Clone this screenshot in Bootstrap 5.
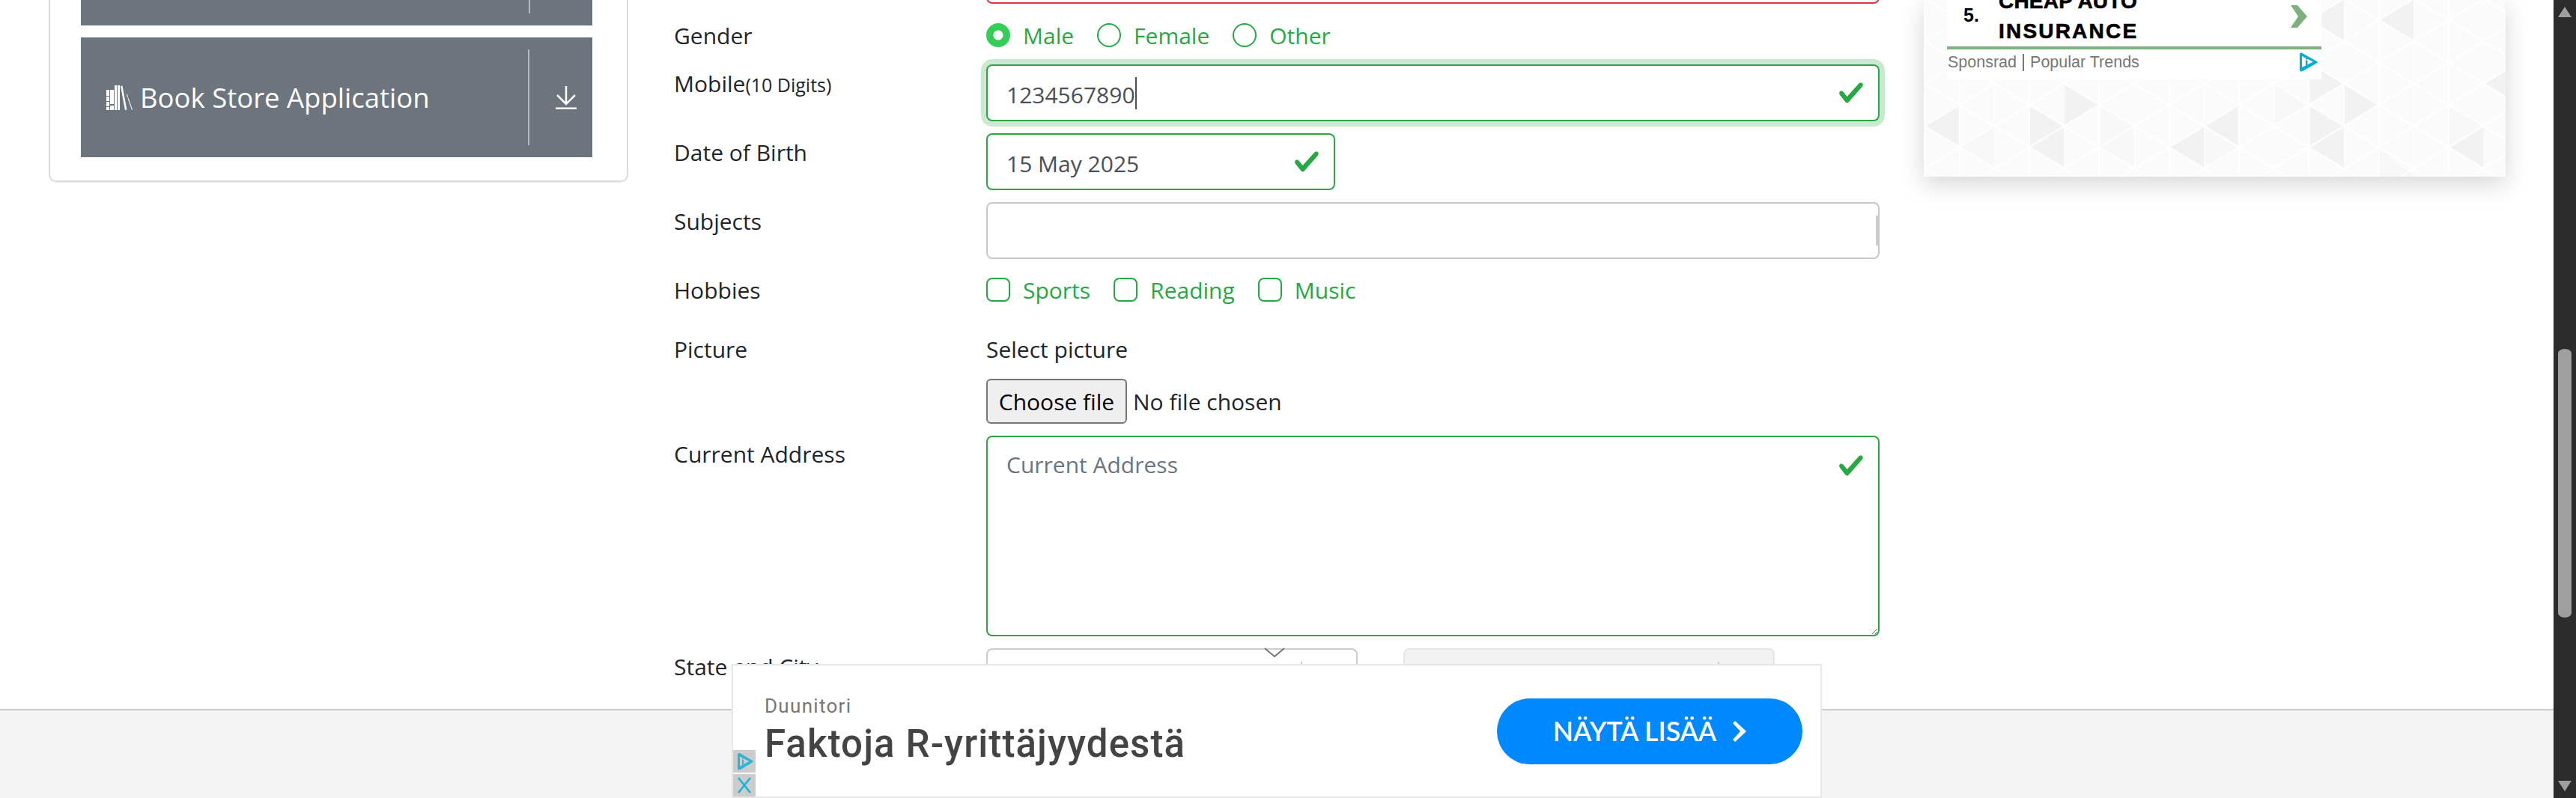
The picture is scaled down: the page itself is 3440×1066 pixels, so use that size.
<!DOCTYPE html>
<html lang="en">
  <head>
    <meta charset="UTF-8" />
    <title>Practice Form</title>
    <link rel="stylesheet" href="https://cdn.jsdelivr.net/npm/bootstrap@5.3.0/dist/css/bootstrap.min.css" />
    <script src="https://cdn.jsdelivr.net/npm/bootstrap@5.3.0/dist/js/bootstrap.bundle.min.js"></script>
    <style>
      html, body { height: 100%; overflow: hidden; }
      body { font-family: "Open Sans", sans-serif; font-size: 30px; color: #212529; background: #fff; }
      .shell { height: 1066px; }
      .page-area { width: 3410px; height: 1066px; }
      .page-main { height: 947px; overflow: hidden; }
      .page-foot { height: 119px; background: #f4f4f4; border-top: 2px solid #ccc; }

      /* fake window scrollbar */
      .win-bar { width: 30px; background: #2c2c2c; padding: 9px 6px 10px; }
      .bar-thumb { height: 359px; margin-top: 443px; background: #9f9f9f; border-radius: 9px / 6px; }
      .bar-up { width: 0; height: 0; border-left: 9px solid transparent; border-right: 9px solid transparent; border-bottom: 14px solid #9f9f9f; }
      .bar-down { width: 0; height: 0; border-left: 9px solid transparent; border-right: 9px solid transparent; border-top: 14px solid #9f9f9f; margin-top: 218px; }

      /* sidebar */
      .side-col { width: 774px; margin-left: 65px; margin-top: -142px; }
      .side-box { border: 2px solid #ddd; border-radius: 10px; padding: 14px 46px 31px 41px; height: 385px; box-shadow: 0 1px 1px rgba(0,0,0,.08); }
      .app-btn { background: #6c757d; color: #fff; height: 160px; padding: 0 21px 0 34px; margin-bottom: 16px; font-size: 36.5px; }
      .app-btn:last-child { margin-bottom: 0; }
      .app-name { width: 564px; gap: 10px; }
      .app-split { width: 2px; height: 128px; background: #b5b9bd; margin-right: 35px; }

      /* form */
      .form-col { width: 1610px; margin-left: 61px; margin-top: -71px; }
      .field-row { display: flex; }
      .field-name { width: 417px; flex: none; padding-top: 2px; }
      .field-name.low-name { padding-top: 3px; }
      .field-name small { font-size: 25px; }
      .field-box { flex: 1; min-width: 0; position: relative; }
      .field-gender { margin-top: 20px; height: 45px; }
      .field-gender .field-name, .field-hobby .field-name { padding-top: 0; }
      .field-mobile { margin-top: 16px; }
      .field-mobile .field-name { padding-top: 3px; }
      .field-hobby { margin-top: 19px; height: 45px; }
      .field-picture { margin-top: 34px; }
      .field-picture .field-name { padding-top: 0; }
      .choose-line { margin-top: 17px; }
      .form-control.txt-input { height: 76px; font-size: 30px; padding: 14px 25px 10px; border: 2px solid #c8c8c8; border-radius: 8px; color: #495057; font-family: inherit; }
      .form-control.txt-input.bad { border-color: #dc3545; }
      .form-control.txt-input.good, .good-area {
        border-color: #28a745;
        background-image: url("data:image/svg+xml,%3csvg xmlns='http://www.w3.org/2000/svg' viewBox='0 0 8 8'%3e%3cpath fill='%2328a745' d='M2.3 6.73L.6 4.53c-.4-1.04.46-1.4 1.1-.8l1.1 1.4 3.4-3.8c.6-.63 1.6-.27 1.2.7l-4 4.6c-.43.5-.8.4-1.1.1z'/%3e%3c/svg%3e");
        background-repeat: no-repeat;
        background-position: right 18px center;
        background-size: 36px 36px;
      }
      .form-control.txt-input.glow, .form-control.txt-input.glow:focus { box-shadow: 0 0 0 7px rgba(40,167,69,.25); }
      .caret-mark { position: absolute; left: 199px; top: 17px; width: 2px; height: 43px; background: #495057; }
      .edge-mark { position: absolute; right: 2px; top: 18px; width: 3px; height: 40px; background: #ccc; }
      .dob-box { width: 466px; }
      .form-control.addr-area { height: 268px; font-size: 30px; padding: 14px 25px 10px; border: 2px solid #28a745; border-radius: 8px; background-position: right 18px top 20px; font-family: inherit; }
      .form-control.addr-area::placeholder { color: #6c757d; }
      .pick-list { display: flex; color: #28a745; }
      .form-check-input.pick-mark { width: 32px; height: 32px; margin: 0 17px 2px 0; flex: none; border: 2px solid #28a745; box-shadow: none; }
      .form-check-input.pick-mark[type=checkbox] { border-radius: 8px; }
      .form-check-input.pick-mark:checked { background: #34ce57; border-color: #34ce57; background-image: radial-gradient(circle, #fff 0 6px, transparent 7px); }
      .pick-item { display: flex; align-items: center; margin-right: 31px; height: 32px; }
      .choose-btn { width: 188px; height: 60px; background: #efefef; border: 2px solid #767676; border-radius: 6px; color: #000; font-size: 30px; padding: 0; font-family: inherit; }
      .pick-combo { width: 496px; height: 76px; border: 2px solid #ccc; border-radius: 8px; padding: 16px 72px 0 0; }
      .pick-combo.off { background: #f2f2f2; border-color: #e6e6e6; margin-left: 61px; }
      .combo-split { width: 2px; height: 60px; background: #ccc; margin-left: auto; }

      /* right ad */
      .rail-col { width: 777px; margin-left: 59px; height: 236px; flex: none; position: relative; background: #fbfbfb; box-shadow: 0 10px 30px rgba(0,0,0,.16); }
      .rail-art { position: absolute; inset: 0; width: 777px; height: 236px; }
      .rail-card { position: relative; width: 500px; height: 106px; margin-left: 31px; background: #fff; font-family: "Liberation Sans", Arial, sans-serif; }
      .rail-top { height: 62px; color: #000; font-weight: 700; overflow: hidden; }
      .rail-num { font-size: 25px; width: 47px; margin: 0 0 20px 22px; flex: none; }
      .rail-words { font-size: 28px; line-height: 40px; margin-top: -18px; letter-spacing: 2.2px; -webkit-text-stroke: .6px #000; flex-grow: 1; align-self: flex-start; }
      .rail-tight { letter-spacing: .2px; }
      .rail-more { margin: 7px 19px 0 0; align-self: flex-start; flex: none; }
      .rail-line { height: 4px; background: #7db07d; }
      .rail-foot { font-size: 21.5px; color: #777; height: 40px; padding: 0 5px 6px 1px; }
      .rail-bar { width: 2px; height: 23px; background: #777; margin: 0 8px; }

      /* bottom ad */
      .strip-ad { position: absolute; left: 977px; top: 887px; width: 1456px; height: 179px; background: #fff; border: 2px solid #e6e6e6; padding: 0 24px 0 42px; }
      .strip-copy { padding-bottom: 4px; }
      .strip-from { font-size: 26px; letter-spacing: 1.3px; color: #777; font-family: Roboto, sans-serif; line-height: 1; }
      .strip-title { font-size: 51px; letter-spacing: 1.1px; color: #444; font-family: Roboto, sans-serif; font-weight: 500; line-height: 1; margin-top: 12px; }
      .strip-go { width: 408px; height: 88px; background: #0088ff; border-radius: 44px; color: #fff; font-family: Lato, sans-serif; font-size: 35.5px; font-weight: 600; gap: 22px; }
      .strip-tag { position: absolute; left: 0; width: 30px; height: 30px; background: #ccc; }
      .strip-fold { position: absolute; left: 1688px; top: 865px; }
    </style>
  </head>
  <body>
    <div class="shell d-flex">
      <div class="page-area d-flex flex-column">
        <div class="page-main d-flex align-items-start">
          <aside class="side-col flex-shrink-0">
            <div class="side-box">
              <div class="app-btn d-flex align-items-center">
                <div class="app-name"></div>
                <div class="app-split"></div>
              </div>
              <div class="app-btn d-flex align-items-center">
                <div class="app-name d-flex align-items-center">
                  <svg width="35" height="33" viewBox="0 0 35 33" fill="#fff"><path d="M0 6h4v8H0zM0 15h4v6H0zM0 22h4v6H0zM0 29h4v4H0zM5 6h5v19H5zM5 27h5v6H5zM11 0h3v33h-3zM15 0h3v33h-3zM19 1l2.400-.6 6 32-2.400.6zM27 12l1-.3 1 4-1 .3zM28.500 17l1-.3 5.500 16-1 .3z"/></svg>
                  <span>Book Store Application</span>
                </div>
                <div class="app-split"></div>
                <svg width="28" height="32" viewBox="0 0 28 32" fill="none" stroke="#fff" stroke-width="2.500"><path d="M14 1v24M2 13l12 12 12-12"/><path d="M0 31h28" stroke-width="3"/></svg>
              </div>
            </div>
          </aside>

          <main class="form-col flex-shrink-0">
            <div class="field-row">
              <div class="field-name"></div>
              <div class="field-box"><input class="form-control txt-input bad" type="text" /></div>
            </div>
            <div class="field-row align-items-center field-gender">
              <div class="field-name">Gender</div>
              <div class="pick-list">
                <label class="pick-item"><input class="form-check-input pick-mark" type="radio" name="g" checked />Male</label>
                <label class="pick-item"><input class="form-check-input pick-mark" type="radio" name="g" />Female</label>
                <label class="pick-item"><input class="form-check-input pick-mark" type="radio" name="g" />Other</label>
              </div>
            </div>
            <div class="field-row field-mobile">
              <div class="field-name">Mobile<small>(10 Digits)</small></div>
              <div class="field-box">
                <input class="form-control txt-input good glow" type="text" value="1234567890" />
                <span class="caret-mark"></span>
              </div>
            </div>
            <div class="field-row mt-3">
              <div class="field-name low-name">Date of Birth</div>
              <div class="dob-box"><input class="form-control txt-input good" type="text" value="15 May 2025" /></div>
            </div>
            <div class="field-row mt-3">
              <div class="field-name low-name">Subjects</div>
              <div class="field-box"><input class="form-control txt-input" type="text" /><span class="edge-mark"></span></div>
            </div>
            <div class="field-row align-items-center field-hobby">
              <div class="field-name">Hobbies</div>
              <div class="pick-list">
                <label class="pick-item"><input class="form-check-input pick-mark" type="checkbox" />Sports</label>
                <label class="pick-item"><input class="form-check-input pick-mark" type="checkbox" />Reading</label>
                <label class="pick-item"><input class="form-check-input pick-mark" type="checkbox" />Music</label>
              </div>
            </div>
            <div class="field-row field-picture">
              <div class="field-name">Picture</div>
              <div>
                <div>Select picture</div>
                <div class="d-flex align-items-center gap-2 choose-line">
                  <button class="choose-btn" type="button">Choose file</button>
                  <span>No file chosen</span>
                </div>
              </div>
            </div>
            <div class="field-row mt-3">
              <div class="field-name">Current Address</div>
              <div class="field-box"><textarea class="form-control addr-area good-area" placeholder="Current Address"></textarea></div>
            </div>
            <div class="field-row mt-3">
              <div class="field-name">State and City</div>
              <div class="d-flex">
                <div class="pick-combo d-flex"><span class="combo-split"></span></div>
                <div class="pick-combo off d-flex"><span class="combo-split"></span></div>
              </div>
            </div>
          </main>

          <section class="rail-col">
            <svg class="rail-art" viewBox="0 0 777 236">
              <defs>
                <pattern id="mesh" x="1" y="-1.700" width="93.330" height="56.670" patternUnits="userSpaceOnUse">
                  <path d="M0 0V56.670M46.670 0V56.670M0 0L93.330 56.670M0 56.670L93.330 0" fill="none" stroke="#fff" stroke-width="2"/>
                </pattern>
              </defs>
              <path fill="#f2f2f2" d="M561 112v56l47-28zM514 140v57l47-29zM561 168v57l-47-28zM421 140v57l-47-29zM374 168v57l-46-28zM654-2v57l-47-28zM749 168v57l-47-28zM561-2v57l-47-28zM514 83v57l47-28zM141 140v57l46-29zM187 112v56l47-28zM48 140v57L1 168zM187 168v57l-46-28zM796 83v57l-47-28z"/>
              <path fill="#f8f8f8" d="M374 168v57l47-28zM234 140v57l47-29zM281 168v57l-47-28zM468 112v56l46-28zM608 197v39h47zM95 168v57l-47-28zM702 140v57l47-29z"/>
              <rect width="777" height="236" fill="url(#mesh)"/>
            </svg>
            <div class="rail-card">
              <div class="rail-top d-flex">
                <span class="rail-num align-self-center">5.</span>
                <div class="rail-words"><span class="rail-tight">CHEAP AUTO</span><br />INSURANCE</div>
                <svg class="rail-more" width="22" height="30" viewBox="0 0 22 30" fill="#7db07d"><path d="M0 0h9l13 15-13 15H0l10-15z"/></svg>
              </div>
              <div class="rail-line"></div>
              <div class="rail-foot d-flex align-items-center">
                <span>Sponsrad</span><span class="rail-bar"></span><span>Popular Trends</span>
                <svg class="ms-auto" width="24" height="26" viewBox="0 0 24 26" fill="#00aecd"><path d="M0 2.500C0 .500 2 0 3.500 1L23 12c1 .7 1 1.500 0 2.200L4 25c-2 1-4 .5-4-1.500zM3 5v15l15-7.500z"/><path d="M8 10.500h2.500v7H8zM8 7.500h2.500v2H8z"/></svg>
              </div>
            </div>
          </section>
        </div>
        <footer class="page-foot"></footer>
      </div>

      <div class="win-bar">
        <div class="bar-up"></div>
        <div class="bar-thumb"></div>
        <div class="bar-down"></div>
      </div>
    </div>

    <svg class="strip-fold" width="28" height="13" viewBox="0 0 28 13" fill="none" stroke="#777" stroke-width="2"><path d="M1 1l13 11L27 1"/></svg>
    <div class="strip-ad d-flex align-items-center justify-content-between">
      <div class="strip-copy">
        <div class="strip-from">Duunitori</div>
        <div class="strip-title">Faktoja R-yrittäjyydestä</div>
      </div>
      <div class="strip-go d-flex align-items-center justify-content-center">
        <span>NÄYTÄ LISÄÄ</span>
        <svg width="18" height="28" viewBox="0 0 18 28" fill="#fff"><path d="M0 3l3-3 15 14L3 28l-3-3 10-11z"/></svg>
      </div>
      <div class="strip-tag" style="top: 113px">
        <svg class="d-block" width="30" height="30" viewBox="0 0 30 30" fill="#2eb5d6"><path d="M6 6C6 4 8 3.500 9.500 4.500L26 14c1 .7 1 1.500 0 2.200L10 26c-2 1-4 .5-4-1.500zM9 8.500v13L21.500 15z"/><path d="M12 13h2v6h-2zM12 10.500h2v1.500h-2z"/></svg>
      </div>
      <div class="strip-tag" style="top: 145px">
        <svg class="d-block" width="30" height="30" viewBox="0 0 30 30" fill="none" stroke="#12b5d6" stroke-width="2.500"><path d="M7 5l16 20M23 5L7 25"/></svg>
      </div>
    </div>
  </body>
</html>
